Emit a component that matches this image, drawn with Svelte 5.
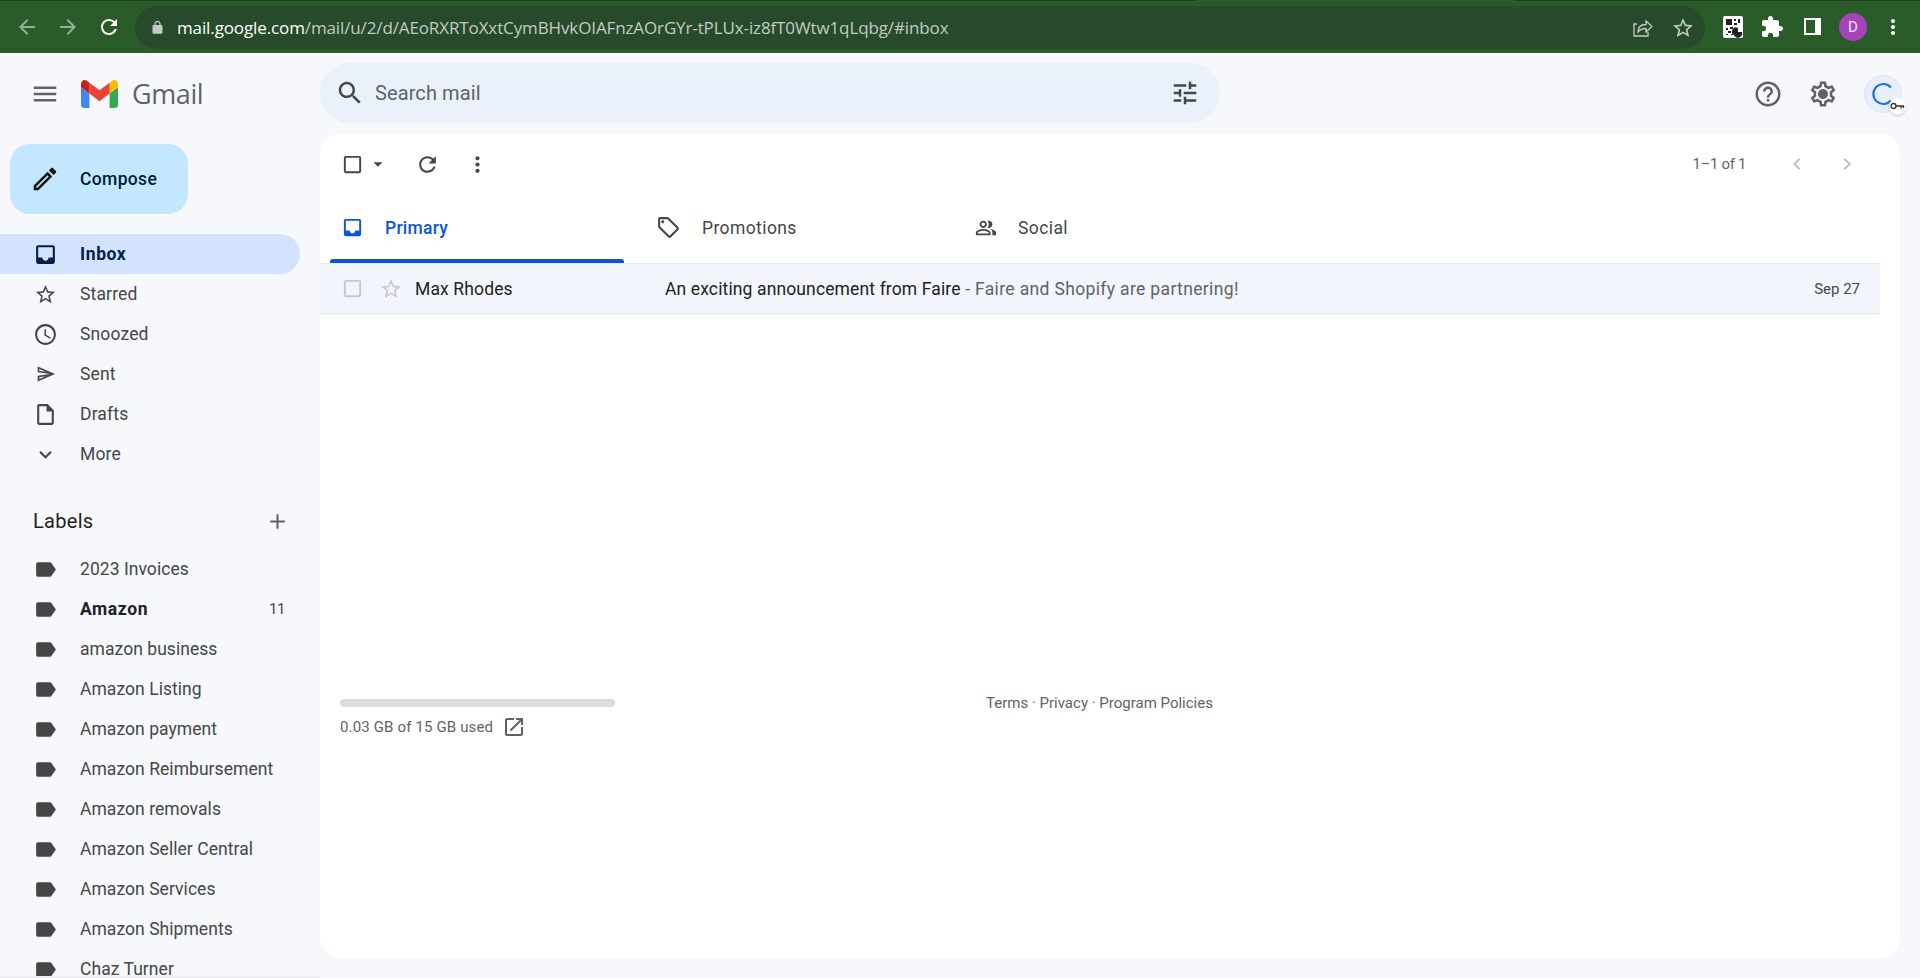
<script>
    const p = {
        back: "M20 11H7.83l5.59-5.59L12 4l-8 8 8 8 1.41-1.41L7.83 13H20v-2z",
        forward: "M12 4l-1.41 1.41L16.17 11H4v2h12.17l-5.58 5.59L12 20l8-8z",
        refresh: "M17.65 6.35C16.2 4.9 14.21 4 12 4c-4.42 0-7.99 3.58-7.99 8s3.57 8 7.99 8c3.73 0 6.84-2.55 7.73-6h-2.08c-.82 2.33-3.04 4-5.65 4-3.31 0-6-2.69-6-6s2.69-6 6-6c1.66 0 3.14.69 4.22 1.78L13 11h7V4l-2.35 2.35z",
        lock: "M18 8h-1V6c0-2.76-2.24-5-5-5S7 3.24 7 6v2H6c-1.1 0-2 .9-2 2v10c0 1.1.9 2 2 2h12c1.1 0 2-.9 2-2V10c0-1.1-.9-2-2-2zM9 6c0-1.66 1.34-3 3-3s3 1.34 3 3v2H9V6z",
        star: "M22 9.24l-7.19-.62L12 2 9.19 8.63 2 9.24l5.46 4.73L5.82 21 12 17.27 18.18 21l-1.63-7.03L22 9.24zM12 15.4l-3.76 2.27 1-4.28-3.32-2.88 4.38-.38L12 6.1l1.71 4.04 4.38.38-3.32 2.88 1 4.28L12 15.4z",
        extension: "M20.5 11H19V7c0-1.1-.9-2-2-2h-4V3.5C13 2.12 11.88 1 10.5 1S8 2.12 8 3.5V5H4c-1.1 0-1.99.9-1.99 2v3.8H3.5c1.49 0 2.7 1.21 2.7 2.7s-1.21 2.7-2.7 2.7H2V20c0 1.1.9 2 2 2h3.8v-1.5c0-1.49 1.21-2.7 2.7-2.7 1.49 0 2.7 1.21 2.7 2.7V22H17c1.1 0 2-.9 2-2v-4h1.5c1.38 0 2.5-1.12 2.5-2.5S21.88 11 20.5 11z",
        more: "M12 8c1.1 0 2-.9 2-2s-.9-2-2-2-2 .9-2 2 .9 2 2 2zm0 2c-1.1 0-2 .9-2 2s.9 2 2 2 2-.9 2-2-.9-2-2-2zm0 6c-1.1 0-2 .9-2 2s.9 2 2 2 2-.9 2-2-.9-2-2-2z",
        menu: "M3 18h18v-2H3v2zm0-5h18v-2H3v2zm0-7v2h18V6H3z",
        search: "M15.5 14h-.79l-.28-.27C15.41 12.59 16 11.11 16 9.5 16 5.91 13.09 3 9.5 3S3 5.91 3 9.5 5.91 16 9.5 16c1.61 0 3.09-.59 4.23-1.57l.27.28v.79l5 4.99L20.49 19l-4.99-5zm-6 0C7.01 14 5 11.99 5 9.5S7.01 5 9.5 5 14 7.01 14 9.5 11.99 14 9.5 14z",
        tune: "M3 17v2h6v-2H3zM3 5v2h10V5H3zm10 16v-2h8v-2h-8v-2h-2v6h2zM7 9v2H3v2h4v2h2V9H7zm14 4v-2H11v2h10zm-6-4h2V7h4V5h-4V3h-2v6z",
        help: "M11 18h2v-2h-2v2zm1-16C6.48 2 2 6.48 2 12s4.48 10 10 10 10-4.48 10-10S17.52 2 12 2zm0 18c-4.41 0-8-3.59-8-8s3.59-8 8-8 8 3.59 8 8-3.59 8-8 8zm0-14c-2.21 0-4 1.79-4 4h2c0-1.1.9-2 2-2s2 .9 2 2c0 2-3 1.75-3 5h2c0-2.25 3-2.5 3-5 0-2.21-1.79-4-4-4z",
        gear: "M19.43 12.98c.04-.32.07-.64.07-.98 0-.34-.03-.66-.07-.98l2.11-1.65c.19-.15.24-.42.12-.64l-2-3.46c-.09-.16-.26-.25-.44-.25-.06 0-.12.01-.17.03l-2.49 1c-.52-.4-1.08-.73-1.69-.98l-.38-2.65C14.46 2.18 14.25 2 14 2h-4c-.25 0-.46.18-.49.42l-.38 2.65c-.61.25-1.17.59-1.69.98l-2.49-1c-.06-.02-.12-.03-.18-.03-.17 0-.34.09-.43.25l-2 3.46c-.13.22-.07.49.12.64l2.11 1.65c-.04.32-.07.65-.07.98 0 .33.03.66.07.98l-2.11 1.65c-.19.15-.24.42-.12.64l2 3.46c.09.16.26.25.44.25.06 0 .12-.01.17-.03l2.49-1c.52.4 1.08.73 1.69.98l.38 2.65c.03.24.24.42.49.42h4c.25 0 .46-.18.49-.42l.38-2.65c.61-.25 1.17-.59 1.69-.98l2.49 1c.06.02.12.03.18.03.17 0 .34-.09.43-.25l2-3.46c.12-.22.07-.49-.12-.64l-2.11-1.65zm-1.98-1.71c.04.31.05.52.05.73 0 .21-.02.43-.05.73l-.14 1.13.89.7 1.08.84-.7 1.21-1.27-.51-1.04-.42-.9.68c-.43.32-.84.56-1.25.73l-1.06.43-.16 1.13-.2 1.35h-1.4l-.19-1.35-.16-1.13-1.06-.43c-.43-.18-.83-.41-1.23-.71l-.91-.7-1.06.43-1.27.51-.7-1.21 1.08-.84.89-.7-.14-1.13c-.03-.31-.05-.54-.05-.74s.02-.43.05-.73l.14-1.13-.89-.7-1.08-.84.7-1.21 1.27.51 1.04.42.9-.68c.43-.32.84-.56 1.25-.73l1.06-.43.16-1.13.2-1.35h1.39l.19 1.35.16 1.13 1.06.43c.43.18.83.41 1.23.71l.91.7 1.06-.43 1.27-.51.7 1.21-1.07.85-.89.7.14 1.13zM12 8c-2.21 0-4 1.79-4 4s1.79 4 4 4 4-1.79 4-4-1.79-4-4-4z",
        edit: "M14.06 9.02l.92.92L5.92 19H5v-.92l9.06-9.06M17.66 3c-.25 0-.51.1-.7.29l-1.83 1.83 3.75 3.75 1.83-1.83c.39-.39.39-1.02 0-1.41l-2.34-2.34c-.2-.2-.45-.29-.71-.29zm-3.6 3.19L3 17.25V21h3.75L17.81 9.94l-3.75-3.75z",
        inbox: "M19 3H5c-1.1 0-2 .9-2 2v14c0 1.1.9 2 2 2h14c1.1 0 2-.9 2-2V5c0-1.1-.9-2-2-2zm0 12h-4c0 1.66-1.35 3-3 3s-3-1.34-3-3H5V5h14v10z",
        clock: "M11.99 2C6.47 2 2 6.48 2 12s4.47 10 9.99 10C17.52 22 22 17.52 22 12S17.52 2 11.99 2zM12 20c-4.42 0-8-3.58-8-8s3.58-8 8-8 8 3.58 8 8-3.58 8-8 8zm.5-13H11v6l5.25 3.15.75-1.23-4.5-2.67z",
        send: "M4.01 6.03l7.51 3.22-7.52-1 .01-2.22m7.5 8.72L4 17.97v-2.22l7.51-1M2.01 3L2 10l15 2-15 2 .01 7L23 12 2.01 3z",
        draft: "M14 2H6c-1.1 0-1.99.9-1.99 2L4 20c0 1.1.89 2 1.99 2H18c1.1 0 2-.9 2-2V8l-6-6zm4 18H6V4h7v5h5v11z",
        expand: "M16.59 8.59L12 13.17 7.41 8.59 6 10l6 6 6-6z",
        add: "M19 13h-6v6h-2v-6H5v-2h6V5h2v6h6v2z",
        label: "M17.63 5.84C17.27 5.33 16.67 5 16 5L5 5.01C3.9 5.01 3 5.9 3 7v10c0 1.1.9 1.99 2 1.99L16 19c.67 0 1.27-.33 1.63-.84L22 12l-4.37-6.16z",
        check: "M19 5v14H5V5h14m0-2H5c-1.1 0-2 .9-2 2v14c0 1.1.9 2 2 2h14c1.1 0 2-.9 2-2V5c0-1.1-.9-2-2-2z",
        caret: "M7 10l5 5 5-5z",
        tag: "M21.41 11.58l-9-9C12.05 2.22 11.55 2 11 2H4c-1.1 0-2 .9-2 2v7c0 .55.22 1.05.59 1.42l9 9c.36.36.86.58 1.41.58s1.05-.22 1.41-.59l7-7c.37-.36.59-.86.59-1.41s-.23-1.06-.59-1.42zM13 20.01L4 11V4h7v-.01l9 9-7 7.02zM6.5 5C5.67 5 5 5.67 5 6.5S5.67 8 6.5 8 8 7.33 8 6.5 7.33 5 6.5 5z",
        people: "M15 8c0-1.42-.5-2.73-1.33-3.76.42-.14.86-.24 1.33-.24 2.21 0 4 1.79 4 4s-1.79 4-4 4c-.43 0-.84-.09-1.23-.21-.03-.01-.06-.02-.1-.03A5.98 5.98 0 0 0 15 8zm1.66 5.13C18.03 14.06 19 15.32 19 17v3h4v-3c0-2.18-3.57-3.47-6.34-3.87zM9 4c-2.21 0-4 1.79-4 4s1.79 4 4 4 4-1.79 4-4-1.79-4-4-4zm0 6c-1.1 0-2-.9-2-2s.9-2 2-2 2 .9 2 2-.9 2-2 2zm0 3c-2.67 0-8 1.34-8 4v3h16v-3c0-2.66-5.33-4-8-4zm6 5H3v-.99C3.2 16.29 6.3 15 9 15s5.8 1.29 6 2v1z",
        open: "M19 19H5V5h7V3H5c-1.11 0-2 .9-2 2v14c0 1.1.89 2 2 2h14c1.1 0 2-.9 2-2v-7h-2v7zM14 3v2h3.59l-9.83 9.83 1.41 1.41L19 6.41V10h2V3h-7z",
        prev: "M15.41 7.41L14 6l-6 6 6 6 1.41-1.41L10.83 12z",
        next: "M10 6L8.59 7.41 13.17 12l-4.58 4.59L10 18l6-6z",
    };

    const nav = [
        { name: "Inbox", icon: "inbox", size: 25, active: true },
        { name: "Starred", icon: "star", size: 23 },
        { name: "Snoozed", icon: "clock", size: 25 },
        { name: "Sent", icon: "send", size: 20 },
        { name: "Drafts", icon: "draft", size: 25 },
        { name: "More", icon: "expand", size: 25 },
    ];

    const labels = [
        { name: "2023 Invoices" },
        { name: "Amazon", count: 11 },
        { name: "amazon business" },
        { name: "Amazon Listing" },
        { name: "Amazon payment" },
        { name: "Amazon Reimbursement" },
        { name: "Amazon removals" },
        { name: "Amazon Seller Central" },
        { name: "Amazon Services" },
        { name: "Amazon Shipments" },
        { name: "Chaz Turner" },
    ];

    const tabs = [
        { name: "Primary", icon: "inbox", size: 23, active: true },
        { name: "Promotions", icon: "tag", size: 25 },
        { name: "Social", icon: "people", size: 22 },
    ];
</script>

{#snippet icon(d, size, cls = "")}
    <svg class={cls} width={size} height={size} viewBox="0 0 24 24" fill="currentColor"><path {d} /></svg>
{/snippet}

<div class="page">
    <div class="browser">
        <div class="history">
            {@render icon(p.back, 24, "dim")}
            {@render icon(p.forward, 24, "dim")}
            {@render icon(p.refresh, 24)}
        </div>
        <div class="omnibox">
            {@render icon(p.lock, 15, "lock")}
            <span class="url"><b>mail.google.com</b>/mail/u/2/d/AEoRXRToXxtCymBHvkOIAFnzAOrGYr-tPLUx-iz8fT0Wtw1qLqbg/#inbox</span>
            <svg class="share" width="24" height="24" viewBox="0 0 24 24" fill="none" stroke="currentColor" stroke-width="1.3">
                <path d="M7 8H4v12h14v-4M8 16c0-5 3-7.500 8-7.500V5l6 5.500-6 5.500v-3.500c-3 0-6 1-8 3.500z" />
            </svg>
            {@render icon(p.star, 24, "bookmark")}
        </div>
        <div class="extensions">
            <svg width="20" height="22" viewBox="0 0 20 22">
                <rect width="20" height="22" rx="2" fill="#fff" />
                <path d="M3 3h6v6H3zM11 3h2v2h-2zM15 3h2v4h-2zM5 5h2v2H5zM11 7h3v2h-3zM3 12h2v2H3zM7 11h3v2H7zM5 15h3v2H5zM3 18h2v1H3zM8 18h2v1H8z" fill="#222" />
                <path d="M11 19a4 4 0 0 1 4-7v4h4a4 4 0 0 1-8 3z" fill="#222" />
            </svg>
            {@render icon(p.extension, 24)}
            <span class="panel"><span></span></span>
            <span class="profile">D</span>
            {@render icon(p.more, 24)}
        </div>
    </div>

    <div class="gmail">
        <header>
            <div class="brand">
                {@render icon(p.menu, 30, "grey")}
                <svg class="logo" width="37" height="28" viewBox="52 42 88 66">
                    <path fill="#4285f4" d="M58 108h14V74L52 59v43c0 3.320 2.690 6 6 6" />
                    <path fill="#34a853" d="M120 108h14c3.320 0 6-2.690 6-6V59l-20 15" />
                    <path fill="#fbbc04" d="M120 48v26l20-15v-8c0-7.420-8.470-11.650-14.400-7.200" />
                    <path fill="#ea4335" d="M72 74V48l24 18 24-18v26L96 92" />
                    <path fill="#c5221f" d="M52 51v8l20 15V48l-5.600-4.200c-5.940-4.450-14.400-.22-14.400 7.200" />
                </svg>
                <span class="wordmark">Gmail</span>
            </div>
            <div class="search">
                {@render icon(p.search, 30, "dark")}
                <span class="placeholder">Search mail</span>
                {@render icon(p.tune, 30, "dark tune")}
            </div>
            <div class="account">
                {@render icon(p.help, 30, "grey")}
                {@render icon(p.gear, 30, "grey")}
                <div class="ring">
                    <svg width="24" height="24" viewBox="0 0 24 24" fill="none" stroke="#1a73e8" stroke-width="2.200">
                        <path d="M20 5.500A10 10 0 1 0 20 18.500" />
                    </svg>
                    <span class="key">
                        <svg width="15" height="8" viewBox="0 0 15 8" fill="none" stroke="#333" stroke-width="1.300">
                            <circle cx="3.500" cy="4" r="2.500" />
                            <path d="M6 4h8M11 4v2.500M13.500 4v2" />
                        </svg>
                    </span>
                </div>
            </div>
        </header>

        <aside>
            <button class="compose">
                {@render icon(p.edit, 30)}
                <span>Compose</span>
            </button>

            <nav>
                {#each nav as item}
                    <div class="row" class:active={item.active}>
                        <span class="slot">{@render icon(p[item.icon], item.size)}</span>
                        <span class="name">{item.name}</span>
                    </div>
                {/each}
            </nav>

            <div class="labels-head">
                <span>Labels</span>
                {@render icon(p.add, 25, "grey")}
            </div>

            <div class="labels">
                {#each labels as item}
                    <div class="row" class:bold={item.count}>
                        <span class="slot">{@render icon(p.label, 25)}</span>
                        <span class="name">{item.name}</span>
                        {#if item.count}<em>{item.count}</em>{/if}
                    </div>
                {/each}
            </div>
        </aside>

        <main>
            <div class="toolbar">
                <div class="select">
                    {@render icon(p.check, 23)}
                    {@render icon(p.caret, 22, "caret")}
                </div>
                {@render icon(p.refresh, 25, "tool")}
                {@render icon(p.more, 25, "tool")}
                <span class="count">1–1 of 1</span>
                {@render icon(p.prev, 24, "page-arrow")}
                {@render icon(p.next, 24, "page-arrow")}
            </div>

            <div class="tabs">
                {#each tabs as tab}
                    <div class="tab" class:active={tab.active}>
                        <span class="tab-icon">{@render icon(p[tab.icon], tab.size)}</span>
                        <span>{tab.name}</span>
                    </div>
                {/each}
            </div>

            <div class="mail">
                {@render icon(p.check, 23, "faint")}
                {@render icon(p.star, 24, "faint mail-star")}
                <span class="sender">Max Rhodes</span>
                <span class="subject">An exciting announcement from Faire <span class="snippet">- Faire and Shopify are partnering!</span></span>
                <span class="date">Sep 27</span>
            </div>

            <footer>
                <div class="storage">
                    <div class="bar"></div>
                    <div class="used">
                        <span>0.03 GB of 15 GB used</span>
                        {@render icon(p.open, 24, "grey")}
                    </div>
                </div>
                <div class="terms">Terms · Privacy · Program Policies</div>
            </footer>
        </main>
    </div>
</div>

<style>
    :global(body) {
        margin: 0;
        overflow: hidden;
    }
    svg {
        display: block;
        flex: none;
    }
    .page {
        width: 1920px;
        height: 978px;
        overflow: hidden;
        font-family: Roboto, "Liberation Sans", sans-serif;
        display: flex;
        flex-direction: column;
    }

    .browser {
        height: 53px;
        box-sizing: border-box;
        background: linear-gradient(to right, #1f3d22 1196px, #2a5c2a 1196px, #2a5c2a 1514px, #1f3d22 1514px) top / 100% 1px no-repeat, #2a5c2a;
        display: flex;
        align-items: center;
        color: #fff;
        flex: none;
    }
    .history {
        width: 135px;
        flex: none;
        display: flex;
        gap: 17px;
        padding-left: 15px;
        box-sizing: border-box;
    }
    .history :global(.dim) {
        opacity: 0.5;
    }
    .omnibox {
        width: 1570px;
        height: 43px;
        margin-top: 2px;
        flex: none;
        box-sizing: border-box;
        background: #274b2a;
        border-radius: 22px;
        display: flex;
        align-items: center;
        padding: 0 10px 0 15px;
        color: #c3ccc4;
    }
    .omnibox :global(.lock) {
        margin-right: 12px;
    }
    .url {
        flex: 1;
        font-family: "Open Sans", sans-serif;
        font-size: 17px;
        white-space: nowrap;
        letter-spacing: -0.12px;
    }
    .url b {
        font-weight: 400;
        color: #fff;
    }
    .share {
        margin-right: 17px;
    }
    .extensions {
        flex: 1;
        display: flex;
        align-items: center;
        gap: 17px;
        padding-left: 18px;
    }
    .panel {
        width: 17px;
        height: 17px;
        border: 2px solid #fff;
        background: #fff;
        margin-left: 3px;
        display: block;
        box-sizing: border-box;
    }
    .panel span {
        display: block;
        width: 9px;
        height: 13px;
        background: #2a5c2a;
    }
    .profile {
        width: 28px;
        height: 28px;
        border-radius: 50%;
        background: #a842b8;
        color: #f3e2f6;
        font-size: 15px;
        display: flex;
        align-items: center;
        justify-content: center;
        margin: 0 -3px 0 1px;
    }

    .gmail {
        flex: 1;
        min-height: 0;
        background: #f6f8fc;
        display: grid;
        grid-template-columns: 320px 1fr;
        grid-template-rows: 81px 1fr;
    }
    .gmail :global(.grey) {
        color: #5f6368;
    }
    .gmail :global(.dark) {
        color: #444746;
    }

    header {
        grid-column: 1 / 3;
        display: flex;
        align-items: center;
    }
    .brand {
        width: 320px;
        flex: none;
        display: flex;
        align-items: center;
        padding-left: 30px;
        box-sizing: border-box;
    }
    .logo {
        margin-left: 21px;
    }
    .wordmark {
        margin-left: 14px;
        font-family: "Open Sans", sans-serif;
        font-size: 27px;
        letter-spacing: -0.4px;
        color: #5f6368;
    }
    .search {
        width: 900px;
        height: 60px;
        margin-top: -1px;
        background: #eaf1fb;
        border-radius: 30px;
        display: flex;
        align-items: center;
        padding: 0 20px 0 15px;
        box-sizing: border-box;
    }
    .placeholder {
        margin-left: 10px;
        flex: 1;
        font-size: 20px;
        letter-spacing: 0.1px;
        color: #5f6368;
    }
    .account {
        flex: 1;
        display: flex;
        align-items: center;
        justify-content: flex-end;
        gap: 25px;
        padding-right: 18px;
    }
    .ring {
        position: relative;
        width: 38px;
        height: 38px;
        margin-left: 1px;
        border-radius: 50%;
        background: #e8effa;
        border: 1px solid #dde5f2;
        box-sizing: border-box;
        display: flex;
        align-items: center;
        justify-content: center;
    }
    .key {
        position: absolute;
        right: -5px;
        bottom: -3px;
        width: 17px;
        height: 17px;
        border-radius: 50%;
        background: #fff;
        box-shadow: 0 1px 2px rgba(0, 0, 0, 0.2);
        display: flex;
        align-items: center;
        justify-content: center;
    }

    aside {
        min-height: 0;
        overflow: hidden;
        border-bottom: 2px solid #eceef1;
    }
    .compose {
        margin: 10px 0 20px 10px;
        width: 178px;
        height: 70px;
        border: 0;
        border-radius: 20px;
        background: #c2e7ff;
        color: #001d35;
        font: 500 17.500px Roboto, sans-serif;
        letter-spacing: 0.35px;
        display: flex;
        align-items: center;
        gap: 20px;
        padding: 0 0 0 20px;
        box-sizing: border-box;
    }
    .compose :global(svg) {
        color: #111;
    }
    .row {
        height: 40px;
        width: 300px;
        box-sizing: border-box;
        display: flex;
        align-items: center;
        padding: 0 15px 0 33px;
        gap: 22px;
        color: #444746;
        font-size: 17.500px;
        letter-spacing: 0.15px;
        border-radius: 0 20px 20px 0;
    }
    .labels .row {
        letter-spacing: 0.05px;
    }
    .slot {
        width: 25px;
        display: flex;
        justify-content: center;
        flex: none;
    }
    .name {
        flex: 1;
        white-space: nowrap;
    }
    .row.active {
        background: #d3e3fd;
        color: #041e49;
        font-weight: 700;
        letter-spacing: 0.6px;
    }
    .labels .row.bold {
        font-weight: 700;
        letter-spacing: 0.6px;
        color: #202124;
    }
    .row.bold .slot {
        color: #444746;
    }
    .labels .row em {
        font-style: normal;
        font-weight: 400;
        font-size: 15px;
        letter-spacing: -0.4px;
        color: #444746;
    }
    .labels-head {
        height: 48px;
        margin-top: 23px;
        width: 300px;
        box-sizing: border-box;
        padding: 0 10px 0 33px;
        display: flex;
        align-items: center;
        justify-content: space-between;
        font-size: 20px;
        letter-spacing: 0.3px;
        color: #1f1f1f;
    }
    .labels {
        margin-top: 4px;
    }

    main {
        background: #fff;
        width: 1580px;
        height: 824px;
        border-radius: 20px;
        box-sizing: border-box;
        padding-right: 20px;
    }
    .toolbar {
        height: 60px;
        display: flex;
        align-items: center;
        padding: 0 8px 0 21px;
        color: #444746;
    }
    .select {
        display: flex;
        align-items: center;
        width: 74px;
    }
    .select :global(.caret) {
        margin-left: 3px;
    }
    .toolbar :global(.tool) {
        margin-right: 25px;
    }
    .count {
        margin-left: auto;
        margin-right: 26px;
        font-size: 15px;
        letter-spacing: -0.35px;
        color: #5f6368;
    }
    .toolbar :global(.page-arrow) {
        margin-left: 13px;
        margin-right: 13px;
        color: #c0c2c5;
    }
    .tabs {
        display: flex;
        height: 69px;
    }
    .tab {
        position: relative;
        width: 317px;
        box-sizing: border-box;
        padding: 0 0 2px 21px;
        display: flex;
        align-items: center;
        gap: 21px;
        font-size: 17.500px;
        letter-spacing: 0.4px;
        color: #444746;
    }
    .tab-icon {
        width: 23px;
    }
    .tab:nth-child(2) .tab-icon {
        margin-left: -2px;
        margin-right: 2px;
    }
    .tab:nth-child(3) .tab-icon {
        margin-right: -1px;
    }
    .tab.active {
        color: #0b57d0;
        font-weight: 500;
        letter-spacing: 0.25px;
    }
    .tab.active::after {
        content: "";
        position: absolute;
        left: 10px;
        width: 294px;
        bottom: 0;
        height: 4px;
        background: #0b57d0;
        border-radius: 3px 3px 0 0;
    }
    .mail {
        height: 51px;
        background: #f2f6fc;
        border-top: 1px solid #e4e7ec;
        border-bottom: 1px solid #e4e7ec;
        box-sizing: border-box;
        display: flex;
        align-items: center;
        padding: 0 20px 0 21px;
        font-size: 17.500px;
        letter-spacing: 0.13px;
        color: #202124;
    }
    .mail :global(.faint) {
        color: #c6c8cb;
    }
    .mail :global(.mail-star) {
        margin-left: 15px;
    }
    .sender {
        width: 250px;
        margin-left: 12px;
    }
    .subject {
        flex: 1;
        white-space: nowrap;
    }
    .snippet {
        color: #5f6368;
        letter-spacing: 0.35px;
    }
    .date {
        font-size: 15px;
        letter-spacing: 0;
        color: #444746;
    }
    footer {
        display: flex;
        margin-top: 385px;
        padding-left: 20px;
    }
    .storage {
        width: 275px;
    }
    .bar {
        height: 8px;
        border-radius: 4px;
        background: #dadce0;
    }
    .used {
        margin-top: 8px;
        display: flex;
        align-items: center;
        gap: 9px;
        font-size: 15px;
        letter-spacing: 0.15px;
        color: #5f6368;
    }
    .terms {
        margin-left: 371px;
        margin-top: -5px;
        font-size: 15px;
        color: #5f6368;
    }
</style>
